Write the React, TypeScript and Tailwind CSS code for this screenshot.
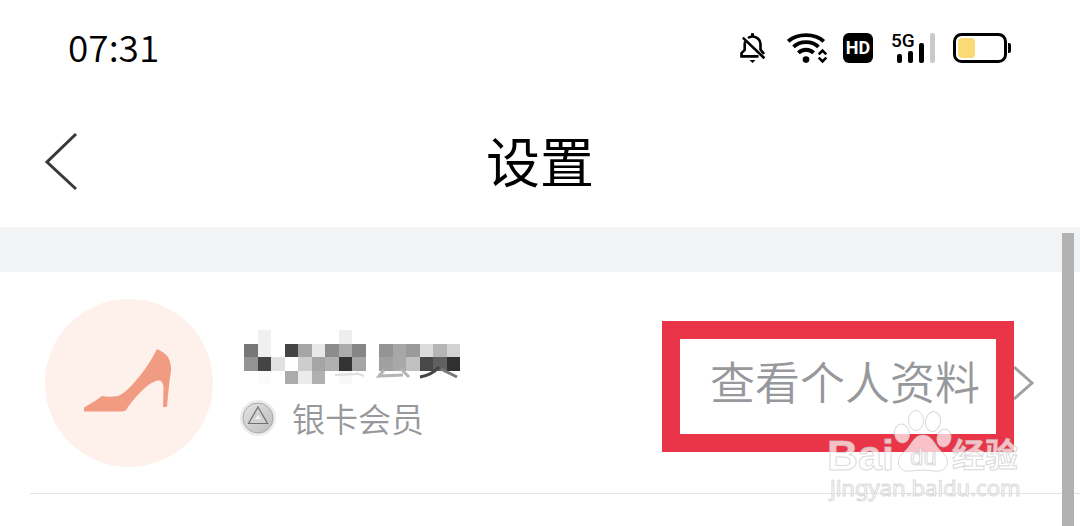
import React from "react";

const nameMosaic: (string | null)[][] = [
  [null, "#f0f0f0", null, null, null, null, null, "#eeeeee", null, null, null, null, null, null, null, null],
  ["#777777", "#f0f0f0", null, "#444444", "#a5a5a5", "#e8e8e8", "#8c8c8c", "#ababab", "#868686", null, "#949494", "#a7a7a7", "#9a9a9a", "#dcdcdc", "#b5b5b5", "#d2d2d2"],
  ["#939393", "#444444", "#e1e1e1", null, "#cdcdcd", "#a5a5a5", "#b0b0b0", "#333333", "#a5a5a5", null, "#a0a0a0", "#a8a8a8", "#c0c0c0", "#484848", "#606060", "#303030"],
  [null, "#fbfbfb", null, "#ababab", "#ebebeb", "#b0b0b0", null, "#f8f8f8", null, null, null, null, null, null, null, null],
];

function MutedBell() {
  return (
    <svg className="h-8 w-7" viewBox="0 0 28 32" fill="none" stroke="#000" strokeWidth="2.6" aria-label="静音" role="img">
      <path d="M9 6A8 8 0 0 1 21.500 12v5.500l3.500 4.500" />
      <path d="M6.300 9.600C5.800 10.500 5.700 11.300 5.700 12.500V18L2.500 21.200V24.400H19.500" />
      <path d="M3.800 5.600 25.400 26.200" />
      <path d="M13.500 1.200v3" strokeWidth="3" />
      <path d="M10.500 28h6l-3 3z" fill="#000" stroke="none" />
    </svg>
  );
}

function Wifi() {
  return (
    <svg className="h-8 w-10" viewBox="0 0 40 32" fill="none" stroke="#000" strokeWidth="3.8" aria-label="Wi-Fi" role="img">
      <path d="M1.200 9.300C10 1 28 1 36.800 9.300" />
      <path d="M6.500 14.900C13 8.500 25 8.500 31.500 14.900" />
      <path d="M11.400 20.800C15.500 16.700 22.500 16.700 26.600 20.800" />
      <circle cx="19" cy="27.600" r="3.300" fill="#000" stroke="none" />
      <path d="m31.700 22.300 3.800-3.800 3.800 3.800M31.700 25.600l3.800 3.800 3.800-3.800" strokeWidth="2.600" />
    </svg>
  );
}

function Signal() {
  return (
    <svg className="h-8 w-11 overflow-visible" viewBox="0 0 44 32" aria-label="5G" role="img">
      <text x="-1" y="15" fontSize="19" fontWeight="500" fontFamily="Roboto, sans-serif">5G</text>
      <rect x="5" y="22" width="5" height="9" rx="2" />
      <rect x="16" y="19" width="5" height="12" rx="2" />
      <rect x="27" y="11" width="5" height="20" rx="2" />
      <rect x="38" y="1" width="5" height="30" rx="2" fill="#cacaca" />
    </svg>
  );
}

function Battery() {
  return (
    <svg className="h-8 w-15" viewBox="0 0 60 32" aria-label="电量" role="img">
      <rect x="2.500" y="2.500" width="51" height="27" rx="7" fill="none" stroke="#000" strokeWidth="3" />
      <rect x="6" y="6" width="17" height="20" rx="4" fill="#fbda75" />
      <path d="M56 11h1q2 0 2 2v6q0 2-2 2h-1z" />
    </svg>
  );
}

function Shoe() {
  return (
    <svg className="h-full w-full" viewBox="0 0 168 168" aria-hidden="true">
      <path
        fill="#f19b83"
        d="M39 108.500 L50 102 57 97 Q64 98.500 73 97 Q80 94 88 85 C97 75 105 64 111 52 L112 50 Q119 53 123 58 Q126.500 65 126 72 C124 84 123 96 122 108 H118 L118.500 88 Q118 83 115 81.500 Q110 81 102 87 C94 94 88 101 83 108 Q81 112.500 77 112.500 H39z"
      />
    </svg>
  );
}

function MaskedName() {
  return (
    <svg className="h-[54px] w-[216px]" viewBox="0 0 216 54" role="img" aria-label="昵称" shapeRendering="crispEdges">
      {nameMosaic.map((row, r) =>
        row.map((fill, c) =>
          fill ? <rect key={`${r}-${c}`} x={c * 13.5} y={r * 13.5} width="13.5" height="13.5" fill={fill} /> : null,
        ),
      )}
      <g fill="none" shapeRendering="auto" strokeWidth="3">
        <path d="M91 45 114 44M112 43l8 3" stroke="#dddddd" strokeWidth="2" />
        <path d="M140 40l-5 6 24-1M157 39l8 8" stroke="#b5b5b5" />
        <path d="M176 47q12-2 19-10" stroke="#444444" />
        <path d="M197 39l16 8" stroke="#777777" />
      </g>
    </svg>
  );
}

function SilverBadge() {
  return (
    <svg className="h-9 w-9" viewBox="0 0 36 36" aria-hidden="true">
      <defs>
        <linearGradient id="silver" x1="0" y1="0" x2="1" y2="1">
          <stop offset="0" stopColor="#e4e4e4" />
          <stop offset="1" stopColor="#bdbdbd" />
        </linearGradient>
      </defs>
      <circle cx="18" cy="18" r="18" fill="#ececec" />
      <circle cx="18" cy="18" r="15" fill="url(#silver)" stroke="#a8a8a8" />
      <path d="M18 7 27.500 23.500H8.500z" fill="#d2d2d2" stroke="#707070" strokeWidth="1.200" />
      <path d="m18 15 3 4h-6z" fill="#f4f4f4" />
    </svg>
  );
}

function Watermark() {
  return (
    <svg className="h-24 w-[200px]" viewBox="0 0 200 96" role="img" aria-label="Baidu 经验">
      <g fill="#fff" fillOpacity="0.7" stroke="#c8c8c8" strokeOpacity="0.7" strokeWidth="1">
        <text x="1" y="61" fontSize="43" fontWeight="700" fontFamily="'Liberation Sans', sans-serif">Bai</text>
        <ellipse cx="90" cy="11.500" rx="7.500" ry="10" />
        <ellipse cx="107" cy="12.500" rx="7.500" ry="10" transform="rotate(10 107 12.500)" />
        <ellipse cx="76" cy="24.500" rx="7.500" ry="9.500" transform="rotate(-10 76 24.500)" />
        <ellipse cx="118" cy="29" rx="7" ry="9" transform="rotate(12 118 29)" />
        <path d="M97 26C87 26 85 38 77 44C68 52 73 64 85 62Q97 60 108 62C121 64 126 52 117 44C109 38 107 26 97 26z" />
        <text x="84" y="56" fontSize="24" fontFamily="'Liberation Sans', sans-serif">du</text>
        <text x="126" y="58" fontSize="33" fontWeight="700" fontFamily="'Noto Sans CJK SC', sans-serif">经验</text>
        <text x="4" y="87" fontSize="22" fontFamily="'Noto Sans', sans-serif">jingyan.baidu.com</text>
      </g>
    </svg>
  );
}

export default function App() {
  return (
    <div className="relative min-h-screen overflow-hidden bg-white font-['Noto_Sans_CJK_SC',sans-serif] text-black">
      <div className="flex h-24 items-center justify-between px-[68px]">
        <time className="pb-1 text-[37px] leading-10 font-[350]">07:31</time>
        <div className="flex items-center gap-4">
          <div className="flex items-center gap-5">
            <MutedBell />
            <Wifi />
          </div>
          <span className="mr-[3px] flex h-[30px] w-[30px] items-center justify-center rounded-md bg-black font-['Liberation_Sans_Narrow',Roboto,sans-serif] text-[18px] leading-7 font-bold text-white">
            HD
          </span>
          <Signal />
          <Battery />
        </div>
      </div>

      <header className="grid h-[131px] grid-cols-[1fr_auto_1fr] items-center px-11">
        <button type="button" aria-label="返回" className="w-9">
          <svg className="h-15 w-9" viewBox="0 0 36 60" fill="none" stroke="#383838" strokeWidth="3">
            <path d="M32 2 3 30l29 27" />
          </svg>
        </button>
        <h1 className="pb-1 text-[54px] leading-[60px] font-normal">设置</h1>
      </header>

      <div className="h-[45px] bg-[#f2f3f5]" />

      <main>
        <section className="relative flex h-[221px] items-center pr-11 pl-[45px]">
          <div className="h-[168px] w-[168px] shrink-0 overflow-hidden rounded-full bg-[#fef0eb]">
            <Shoe />
          </div>
          <div className="ml-[27px] flex flex-col gap-4">
            <div className="pl-1">
              <MaskedName />
            </div>
            <div className="flex items-center gap-4 text-[33px] leading-9 font-[350] text-[#97989b]">
              <SilverBadge />
              <span>银卡会员</span>
            </div>
          </div>
          <a href="#profile" className="relative ml-auto flex items-center gap-8 text-[45px] leading-[60px] font-[350] text-[#97989b]">
            <span className="pb-1">查看个人资料</span>
            <svg className="h-9 w-6" viewBox="0 0 24 36" fill="none" stroke="#a0a1a5" strokeWidth="3" aria-hidden="true">
              <path d="m2 2 18 16L2 34" />
            </svg>
            <span className="absolute -top-[30px] right-[22px] -left-12 h-[131px] border-[18px] border-[#ea3548]" />
          </a>
          <div className="pointer-events-none absolute right-[54px] -bottom-3">
            <Watermark />
          </div>
        </section>
        <hr className="ml-[30px] border-t border-[#e4e4e4]" />
      </main>

      <div className="absolute top-[233px] right-1.5 bottom-0 w-3 bg-[#b2b2b2]" />
    </div>
  );
}
